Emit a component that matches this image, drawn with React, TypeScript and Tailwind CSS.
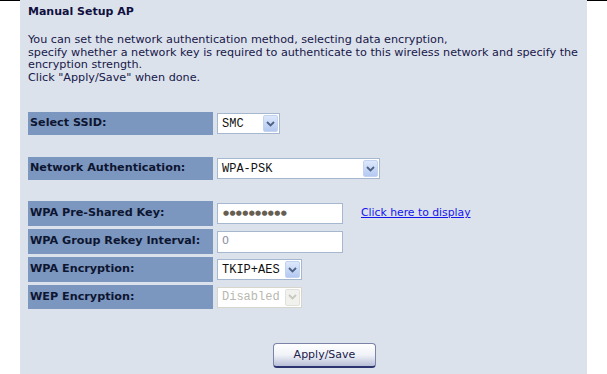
import React from "react";

const font = { fontFamily: '"DejaVu Sans", Verdana, sans-serif' };
const mono = { fontFamily: '"Liberation Mono", "Courier New", monospace' };

function Arrow({ disabled = false }: { disabled?: boolean }) {
  return (
    <span
      className={`flex h-[17px] w-[15px] items-center justify-center rounded-[2px] ${
        disabled
          ? "bg-[#f1f1ee] border border-[#e2e2dc]"
          : "bg-gradient-to-b from-[#dde8fb] to-[#b4c9f1] border border-[#c2d3f2]"
      }`}
    >
      <svg width="9" height="6" viewBox="0 0 9 6">
        <path
          d="M1 1 L4.5 4.5 L8 1"
          fill="none"
          stroke={disabled ? "#c8c8c0" : "#4d6185"}
          strokeWidth="1.8"
        />
      </svg>
    </span>
  );
}

function Select({
  value,
  width,
  disabled = false,
}: {
  value: string;
  width: string;
  disabled?: boolean;
}) {
  return (
    <div
      className={`flex h-[21px] items-center justify-between bg-white pl-[4px] pr-[1px] border ${
        disabled ? "border-[#d6d6cc]" : "border-[#a5b8d0]"
      } ${width}`}
    >
      <span
        className={`text-[12px] leading-none ${
          disabled ? "text-[#b8b8b0]" : "text-[#111]"
        }`}
        style={mono}
      >
        {value}
      </span>
      <Arrow disabled={disabled} />
    </div>
  );
}

function Label({ children, h = "h-[25px]" }: { children: React.ReactNode; h?: string }) {
  return (
    <div
      className={`flex w-[185px] items-center bg-[#7b96bf] pl-[2px] text-[11.2px] font-bold text-[#0d1530] ${h}`}
    >
      {children}
    </div>
  );
}

export default function App() {
  return (
    <div className="flex h-[374px] w-[607px] bg-white" style={font}>
      <div className="w-[20px] border-t border-black" />
      <div className="flex w-[567px] flex-col bg-[#dce2eb] pl-[8px] text-[#17174a]">
        <h1 className="mt-[5px] text-[11px] font-bold leading-[14px] text-[#101040]">
          Manual Setup AP
        </h1>
        <p className="mt-[15px] text-[11.2px] leading-[12.5px]">
          You can set the network authentication method, selecting data encryption,
          <br />
          specify whether a network key is required to authenticate to this wireless network and specify the
          <br />
          encryption strength.
          <br />
          Click "Apply/Save" when done.
        </p>

        <div className="mt-[28px] flex items-center gap-[4px]">
          <Label h="h-[23px]">Select SSID:</Label>
          <Select value="SMC" width="w-[63px]" />
        </div>

        <div className="mt-[22px] flex items-center gap-[4px]">
          <Label h="h-[23px]">Network Authentication:</Label>
          <Select value="WPA-PSK" width="w-[163px]" />
        </div>

        <div className="mt-[21px] flex flex-col gap-[3px]">
          <div className="flex items-center gap-[4px]">
            <Label>WPA Pre-Shared Key:</Label>
            <div className="flex h-[21px] w-[126px] items-center border border-[#a5b8d0] bg-white pl-[5px] text-[7px] tracking-[0.3px] text-[#665e50]">
              ●●●●●●●●●●
            </div>
            <a className="ml-[14px] text-[10.8px] text-[#1414ee] underline" href="#">
              Click here to display
            </a>
          </div>
          <div className="flex items-center gap-[4px]">
            <Label>WPA Group Rekey Interval:</Label>
            <div className="flex h-[22px] w-[126px] items-center border border-[#a5b8d0] bg-white pl-[4px] text-[11px] text-[#8a8aa0]">
              0
            </div>
          </div>
          <div className="flex items-center gap-[4px]">
            <Label>WPA Encryption:</Label>
            <Select value="TKIP+AES" width="w-[85px]" />
          </div>
          <div className="flex items-center gap-[4px]">
            <Label h="h-[24px]">WEP Encryption:</Label>
            <Select value="Disabled" width="w-[85px]" disabled />
          </div>
        </div>

        <div className="mt-[34px] flex pl-[245px]">
          <button className="h-[25px] w-[103px] rounded-[4px] border border-[#7b83a8] border-b-2 border-b-[#2c3570] bg-gradient-to-b from-white via-[#f0f2f8] to-[#b8c0d8] text-[11px] text-[#20204a]">
            Apply/Save
          </button>
        </div>
      </div>
      <div className="w-[20px] border-t border-black" />
    </div>
  );
}
